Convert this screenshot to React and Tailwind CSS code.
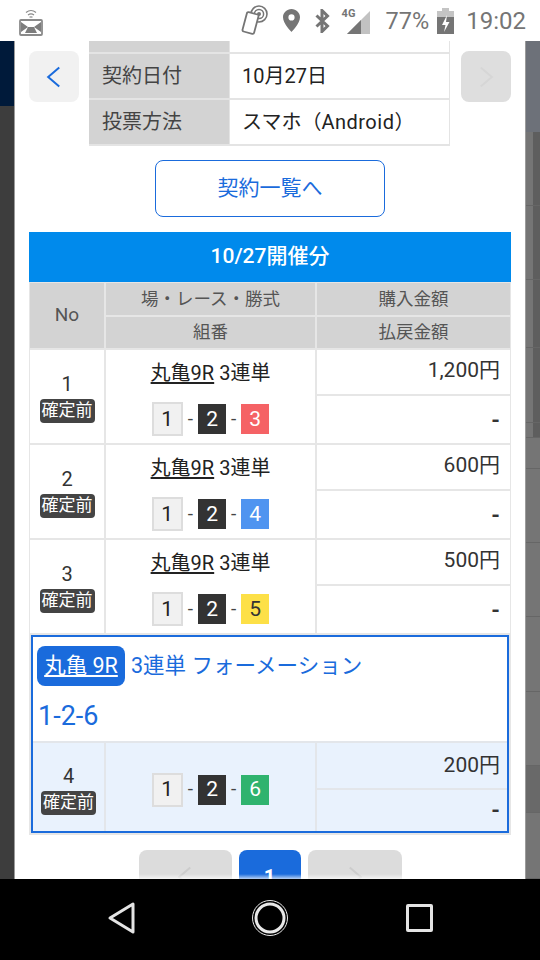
import React from 'react';

const FONT = 'font-[Roboto,"Noto_Sans_CJK_JP",sans-serif]';
const BLUE = '#1a6bdc';

const ROWS = [
  { no: 1, amount: '1,200円', third: '3', color: 'bg-[#f56265]' },
  { no: 2, amount: '600円', third: '4', color: 'bg-[#4f94f0]' },
  { no: 3, amount: '500円', third: '5', color: 'bg-[#fde047] !text-[#333]' },
];

// 背景の帯 (右端)
const DARK_BANDS = [74, 74, 68, 75, 15];
const PLAIN_BANDS = [
  { h: 31, c: 'bg-[#757575]' },
  { h: 74, c: 'bg-[#757575]' },
  { h: 74, c: 'bg-[#757575]' },
  { h: 75, c: 'bg-[#757575]' },
  { h: 74, c: 'bg-[#757575]' },
  { h: 47, c: 'bg-[#696969]' },
  { h: 66, c: 'bg-[#757575]' },
];

function StatusBar() {
  return (
    <div className="flex h-[41px] shrink-0 items-center bg-white pl-[19px] pr-[14px] text-[#757575]">
      <svg width="24" height="28" viewBox="0 0 24 28" className="mb-[-3px]">
        <path d="M7 4.500c3-2.400 7-2.400 10 0M9 7c2-1.500 4-1.500 6 0M10.500 9.300c1-.7 2-.7 3 0" fill="none" stroke="#8a8a8a" strokeWidth="1.200" />
        <rect x="1" y="12" width="22" height="15" rx="1" fill="#fff" stroke="#8a8a8a" strokeWidth="1.800" />
        <path d="M2 14l7 5-7 5zM22 14l-7 5 7 5zM9 19h6l3 6H6z" fill="#7d7d7d" />
      </svg>
      <div className="ml-auto flex items-center">
        <svg width="28" height="31" viewBox="0 0 28 31">
          <g fill="none" stroke="#757575">
            <circle cx="18" cy="9" r="8" strokeWidth="1.600" />
            <circle cx="18" cy="9" r="4.600" strokeWidth="1.500" />
          </g>
          <circle cx="18" cy="9" r="2" fill="#757575" />
          <path d="M10 7l5 1.500 -2.500 9L8 16z" fill="#fff" />
          <rect x="3.500" y="8" width="12" height="20" rx="1.500" transform="rotate(15 9.500 18)" fill="#fff" stroke="#757575" strokeWidth="1.800" />
        </svg>
        <svg width="17" height="23" viewBox="0 0 17 23" className="ml-[14px]">
          <path fillRule="evenodd" d="M8.500 0C3.800 0 0 3.700 0 8.300 0 14.500 8.500 23 8.500 23S17 14.500 17 8.300C17 3.700 13.200 0 8.500 0zm0 11.500a3.100 3.100 0 1 1 0-6.200 3.100 3.100 0 0 1 0 6.200z" fill="#757575" />
        </svg>
        <svg width="15" height="24" viewBox="0 0 15 24" className="ml-[15px]">
          <path d="M1.500 6.500l11 10.500-5.500 5.500V1.500L12.500 7 1.500 17.500" fill="none" stroke="#757575" strokeWidth="3" />
        </svg>
        <div className="relative ml-[12px] h-[26px] w-[29px]">
          <svg width="29" height="26" viewBox="0 0 29 26" className="absolute inset-0">
            <path d="M28 3v23H5z" fill="#c2c2c2" />
            <path d="M19 12v14H5z" fill="#757575" />
          </svg>
          <span className="absolute left-0 top-[-1px] text-[11px] font-bold leading-[14px]">4G</span>
        </div>
        <span className="ml-[15px] text-[23.500px] leading-[30px]">77%</span>
        <svg width="17" height="26" viewBox="0 0 17 26" className="ml-[8px]">
          <path d="M5 0h7v3h5v23H0V3h5z" fill="#c4c4c4" />
          <path d="M0 9h17v17H0z" fill="#757575" />
          <path d="M10 7l-5 10h3.500L7 24l5.500-10H9z" fill="#fff" />
        </svg>
        <span className="ml-[12px] text-[24px] leading-[30px]">19:02</span>
      </div>
    </div>
  );
}

function NavBar() {
  return (
    <div className="flex h-[81px] shrink-0 items-center justify-center bg-black pb-[3px]">
      <svg width="30" height="34" viewBox="0 0 30 34">
        <path d="M26 3v28L3 17z" fill="none" stroke="#e4e4e4" strokeWidth="3" strokeLinejoin="round" />
      </svg>
      <svg width="38" height="38" viewBox="0 0 38 38" className="ml-[114px]">
        <circle cx="19" cy="19" r="17.500" fill="none" stroke="#e8e8e8" strokeWidth="1" />
        <circle cx="19" cy="19" r="14" fill="none" stroke="#e8e8e8" strokeWidth="3" />
      </svg>
      <div className="ml-[117px] h-[28px] w-[27px] rounded-[2px] border-[3px] border-[#e4e4e4]" />
    </div>
  );
}

function BoatNo({ n, className }) {
  return (
    <span className={`flex h-[30px] w-[28px] items-center justify-center text-[21px] leading-none text-white ${className}`}>
      {n}
    </span>
  );
}

function Combo({ third, color }) {
  return (
    <div className="flex items-center justify-center text-[19px] text-[#444]">
      <span className="flex h-[34px] w-[31px] items-center justify-center border-2 border-[#dddddd] bg-[#f1f1f1] text-[21px] leading-none text-[#222]">1</span>
      <span className="w-[15.500px] text-center">-</span>
      <BoatNo n="2" className="bg-[#333333]" />
      <span className="w-[15px] text-center">-</span>
      <BoatNo n={third} className={color} />
    </div>
  );
}

function NoCell({ no, className = '' }) {
  return (
    <div className={`flex flex-col items-center justify-center ${className}`}>
      <span className="text-[20px] leading-[26px] text-[#333]">{no}</span>
      <span className="mt-[2px] flex h-[24px] w-[55px] items-center justify-center rounded-[4px] bg-[#444444] text-[17px] leading-none text-white">確定前</span>
    </div>
  );
}

function RaceRow({ no, amount, third, color }) {
  return (
    <div className="grid h-[93px] grid-cols-[74px_209px_1fr] gap-[2px]">
      <NoCell no={no} className="bg-white" />
      <div className="flex flex-col items-center bg-white pt-[10px]">
        <div className="text-[20px] leading-[26px] text-[#222]">
          <span className="underline underline-offset-2">丸亀9R</span> 3連単
        </div>
        <div className="mt-[16px]">
          <Combo third={third} color={color} />
        </div>
      </div>
      <div className="flex flex-col gap-[2px]">
        <div className="flex h-[44px] items-center justify-end bg-white pb-[2px] pr-[10px] text-[21px] text-[#333]">{amount}</div>
        <div className="flex flex-1 items-center justify-end bg-white pr-[10px] pt-[1px] text-[22px] font-bold text-[#333]">-</div>
      </div>
    </div>
  );
}

function Chevron({ dir, color }) {
  return (
    <svg width="28" height="28" viewBox="0 0 24 24">
      <path d={dir === 'left' ? 'M16.500 3.800l-9.500 8.200 9.500 8.200' : 'M7.500 3.800l9.500 8.200-9.500 8.200'} fill="none" stroke={color} strokeWidth="1.700" />
    </svg>
  );
}

export default function App() {
  return (
    <div className={`flex h-[960px] w-[540px] flex-col overflow-hidden bg-black ${FONT}`}>
      <StatusBar />

      <div className="flex min-h-0 flex-1">
        {/* 背景 左 */}
        <div className="flex w-[15px] shrink-0 flex-col border-r border-[#9b9b9b]">
          <div className="h-[65px] bg-[#001a3a]" />
          <div className="flex-1 bg-[#3d3d3d]" />
        </div>

        {/* モーダル本体 */}
        <div className="relative min-w-0 flex-1 overflow-hidden bg-white px-[14px]">
          <div className="flex items-start">
            <button className="mt-[10px] flex h-[51px] w-[50px] shrink-0 items-center justify-center rounded-lg bg-[#f1f1f1]">
              <Chevron dir="left" color={BLUE} />
            </button>

            <div className="ml-[10px] grid w-[361px] shrink-0 grid-cols-[140px_1fr] gap-x-[1px] gap-y-[2px] bg-[#e4e4e4] pb-[2px] pr-[1px] text-[20px]">
              <div className="h-[11px] bg-[#d3d3d3]" />
              <div className="h-[11px] bg-white" />
              <div className="flex h-[44px] items-center bg-[#d3d3d3] pl-[13px] text-[#444]">契約日付</div>
              <div className="flex h-[44px] items-center bg-white pl-[12px] text-[#222]">10月27日</div>
              <div className="flex h-[44px] items-center bg-[#d3d3d3] pl-[13px] text-[#444]">投票方法</div>
              <div className="flex h-[44px] items-center bg-white pl-[12px] text-[#222]">
                <span>スマホ（<span className="tracking-[0.500px]">Android</span>）</span>
              </div>
            </div>

            <button className="ml-[11px] mt-[10px] flex h-[51px] w-[50px] shrink-0 items-center justify-center rounded-lg bg-[#dedede]">
              <Chevron dir="right" color="#d6d6d6" />
            </button>
          </div>

          <div className="mt-[14px] flex justify-center">
            <button className="flex h-[57px] w-[230px] items-center justify-center rounded-lg border-[1.500px] border-[#1a6bdc] text-[21px] text-[#1a6bdc]">
              契約一覧へ
            </button>
          </div>

          <div className="mt-[15px] flex h-[50px] items-center justify-center bg-[#008aec] text-[21px] font-medium text-white">
            10/27開催分
          </div>

          <div className="flex flex-col gap-[2px] bg-[#e6e6e6] px-[1px] pb-[2px] pt-[1px]">
            {/* 見出し */}
            <div className="grid grid-cols-[74px_209px_1fr] grid-rows-[32px_31px] gap-[2px] text-[17.500px] text-[#555]">
              <div className="row-span-2 flex items-center justify-center bg-[#d3d3d3] pb-[1px] text-[19px]">No</div>
              <div className="flex items-center justify-center bg-[#d3d3d3]">場・レース・勝式</div>
              <div className="flex items-center justify-center bg-[#d3d3d3]">購入金額</div>
              <div className="flex items-center justify-center bg-[#d3d3d3]">組番</div>
              <div className="flex items-center justify-center bg-[#d3d3d3]">払戻金額</div>
            </div>

            {ROWS.map((r) => (
              <RaceRow key={r.no} {...r} />
            ))}

            {/* フォーメーション */}
            <div className="mx-[1px] border-[2.500px] border-[#1a6bdc] bg-[#e3e6ea]">
              <div className="flex h-[104px] flex-col bg-white pl-[4px] pt-[9px] text-[#1a6bdc]">
                <div className="flex items-center">
                  <span className="flex h-[40px] w-[88px] items-center justify-center rounded-lg bg-[#1a6bdc] text-[21.500px] text-white underline underline-offset-2">丸亀 9R</span>
                  <span className="ml-[6px] text-[21.500px]">3連単 フォーメーション</span>
                </div>
                <div className="ml-[1px] mt-[12px] text-[27px] leading-[36px]">1-2-6</div>
              </div>
              <div className="mt-[2px] grid h-[88px] grid-cols-[71px_209px_1fr] gap-x-[2px]">
                <NoCell no={4} className="bg-[#e9f2fd] pt-[3px]" />
                <div className="flex items-center justify-center bg-[#e9f2fd] pt-[5px]">
                  <Combo third="6" color="bg-[#2fb36e]" />
                </div>
                <div className="flex flex-col gap-[2px]">
                  <div className="flex h-[45px] items-center justify-end bg-[#e9f2fd] pr-[7px] text-[21px] text-[#333]">200円</div>
                  <div className="flex flex-1 items-center justify-end bg-[#e9f2fd] pr-[7px] text-[22px] font-bold text-[#333]">-</div>
                </div>
              </div>
            </div>
          </div>

          <div className="mt-[15px] flex justify-center gap-[7px]">
            <div className="flex h-[54px] w-[93px] items-center justify-center rounded-lg bg-[#dcdcdc]">
              <Chevron dir="left" color="#cccccc" />
            </div>
            <div className="flex h-[54px] w-[62px] items-center justify-center rounded-lg bg-[#1a6bdc] text-[20px] font-bold text-white">1</div>
            <div className="flex h-[54px] w-[94px] items-center justify-center rounded-lg bg-[#dcdcdc]">
              <Chevron dir="right" color="#cccccc" />
            </div>
          </div>

          <div className="absolute inset-x-0 bottom-0 h-[5px] bg-gradient-to-b from-white/0 to-white/70" />
        </div>

        {/* 背景 右 */}
        <div className="flex w-[15px] shrink-0 flex-col border-l border-[#9b9b9b]">
          <div className="h-[91px] shrink-0 bg-[#6d7179]" />
          {DARK_BANDS.map((h, i) => (
            <div key={i} className="flex shrink-0 border-b border-[#666]" style={{ height: h }}>
              <div className="w-[7px] bg-[#757575]" />
              <div className="flex-1 bg-[#5e5e5e]" />
            </div>
          ))}
          {PLAIN_BANDS.map((b, i) => (
            <div key={i} className={`shrink-0 border-b border-[#666] ${b.c}`} style={{ height: b.h }} />
          ))}
        </div>
      </div>

      <NavBar />
    </div>
  );
}
